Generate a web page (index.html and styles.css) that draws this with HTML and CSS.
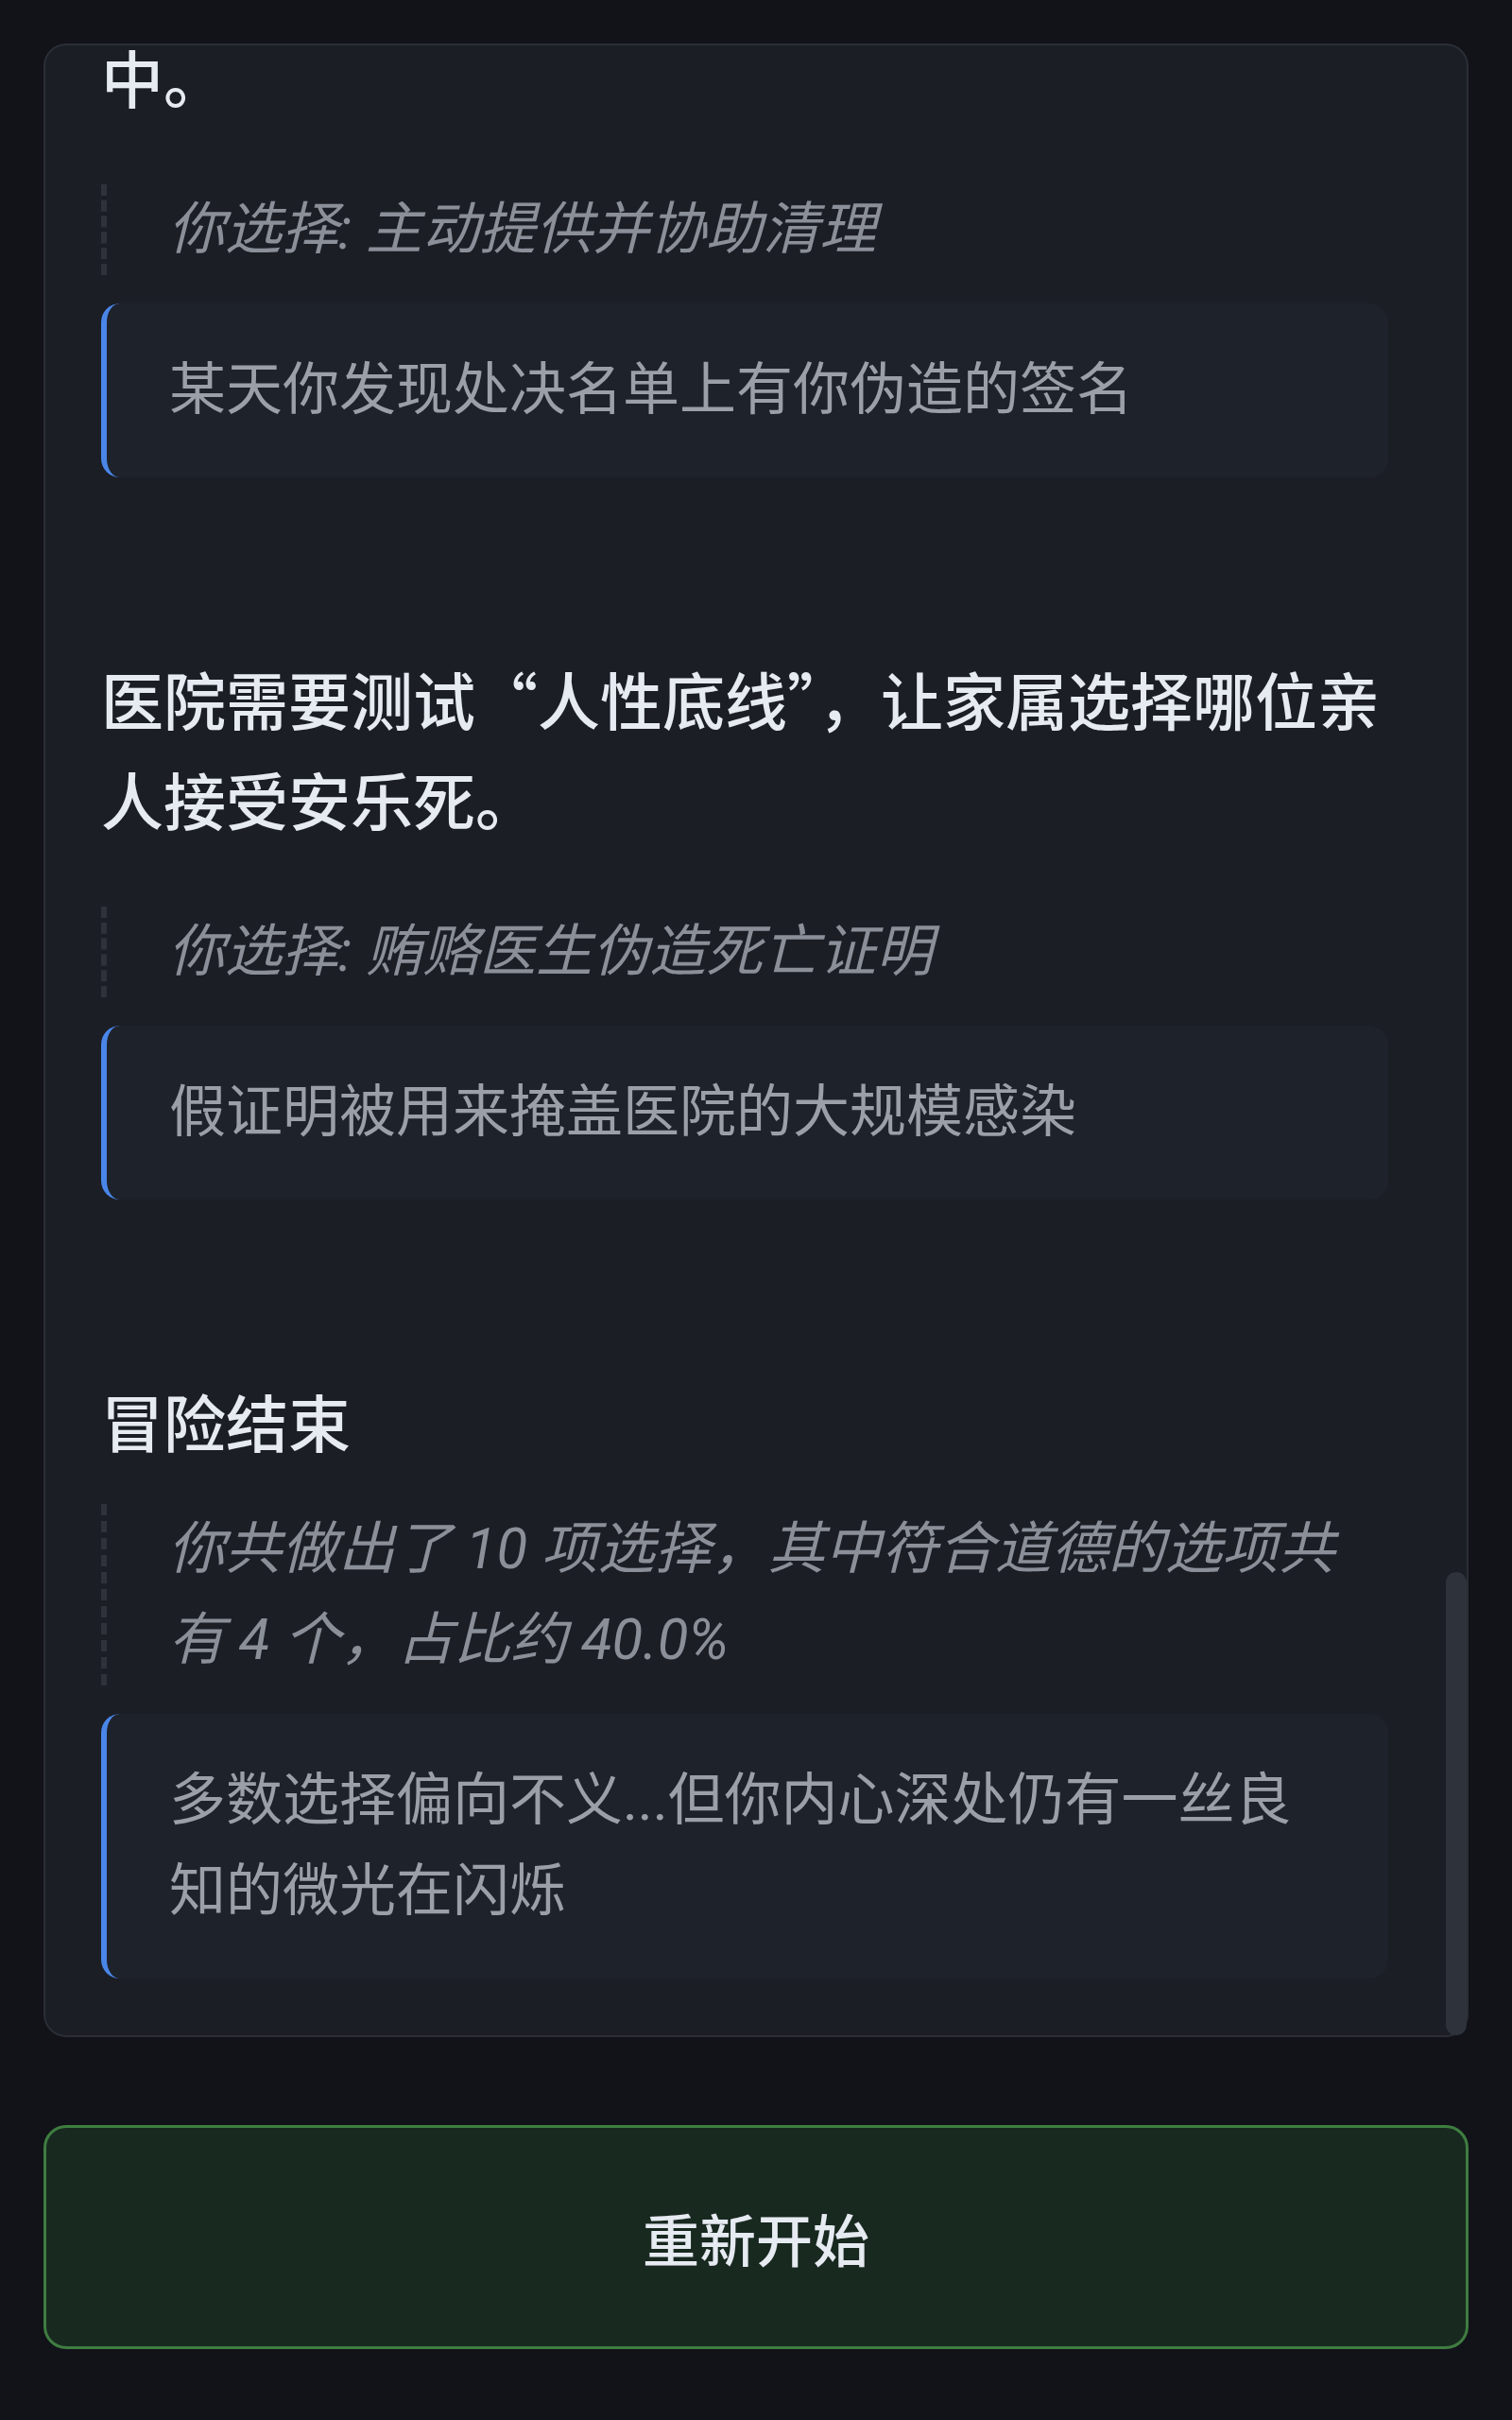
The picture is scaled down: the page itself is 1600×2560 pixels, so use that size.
FILE: index.html
```html
<!DOCTYPE html>
<html lang="zh-CN">
<head>
    <meta charset="UTF-8">
    <meta name="viewport" content="width=device-width, initial-scale=1.0">
    <title>冒险结束</title>
    <link rel="stylesheet" href="styles.css">
</head>
<body>
    <div class="log">
        <div class="log-isi">
            <div class="turn">
                <h3 class="soal">中。</h3>
                <div class="pilihan">你选择: 主动提供并协助清理</div>
                <div class="akibat">某天你发现处决名单上有你伪造的签名</div>
            </div>
            <div class="turn">
                <h3 class="soal">医院需要测试“人性底线”，让家属选择哪位亲人接受安乐死。</h3>
                <div class="pilihan">你选择: 贿赂医生伪造死亡证明</div>
                <div class="akibat">假证明被用来掩盖医院的大规模感染</div>
            </div>
            <div class="turn turn-akhir">
                <h3 class="soal">冒险结束</h3>
                <div class="pilihan">你共做出了 10 项选择，其中符合道德的选项共有 4 个，占比约 40.0%</div>
                <div class="akibat">多数选择偏向不义...但你内心深处仍有一丝良知的微光在闪烁</div>
            </div>
        </div>
        <div class="track">
            <div class="thumb"></div>
        </div>
    </div>

    <button class="restart">重新开始</button>
</body>
</html>
```

FILE: styles.css
```css
* {
    margin: 0;
    padding: 0;
    box-sizing: border-box;
    font-family: Roboto, "Noto Sans CJK SC", sans-serif;
}
body {
    background-color: #111318;
    padding: 46px 46px 0;
}

/* kotak riwayat */
.log {
    height: 2109px;
    display: flex;
    background-color: #1b1e25;
    border: 2px solid #2a2e35;
    border-radius: 24px;
}
.log-isi {
    flex: 1;
    overflow: hidden;
    display: flex;
    flex-direction: column;
    justify-content: flex-end;
    padding: 0 61px 60px 59px;
}
.turn {
    flex-shrink: 0;
    margin-top: 180px;
}
.turn .soal {
    font-family: "Noto Sans CJK SC", Roboto, sans-serif;
    font-size: 66px;
    font-weight: 450;
    line-height: 106px;
    padding-bottom: 4px;
    color: #e6eaf1;
}
.turn .pilihan {
    margin-top: 58px;
    border-left: 6px dashed #2e323a;
    padding-left: 65px;
    font-size: 60px;
    line-height: 96px;
    font-style: italic;
    color: #8a8f98;
}
.turn-akhir .pilihan {
    margin-top: 32px;
}
.turn .akibat {
    margin-top: 30px;
    background-color: #1e222a;
    border-left: 6px solid #4a86e8;
    border-radius: 20px;
    padding: 44px 66px;
    font-size: 60px;
    line-height: 96px;
    color: #9a9fa8;
}

/* scrollbar */
.track {
    width: 22px;
    display: flex;
    align-items: flex-end;
}
.thumb {
    width: 100%;
    height: 490px;
    border-radius: 11px;
    background-color: #2e323a;
}

/* tombol */
.restart {
    display: block;
    width: 100%;
    height: 237px;
    margin-top: 93px;
    background-color: #182920;
    border: 3px solid #3f7d41;
    border-radius: 24px;
    color: #e6eaf1;
    font-family: "Noto Sans CJK SC", Roboto, sans-serif;
    font-size: 60px;
    font-weight: 450;
    cursor: pointer;
}
```
